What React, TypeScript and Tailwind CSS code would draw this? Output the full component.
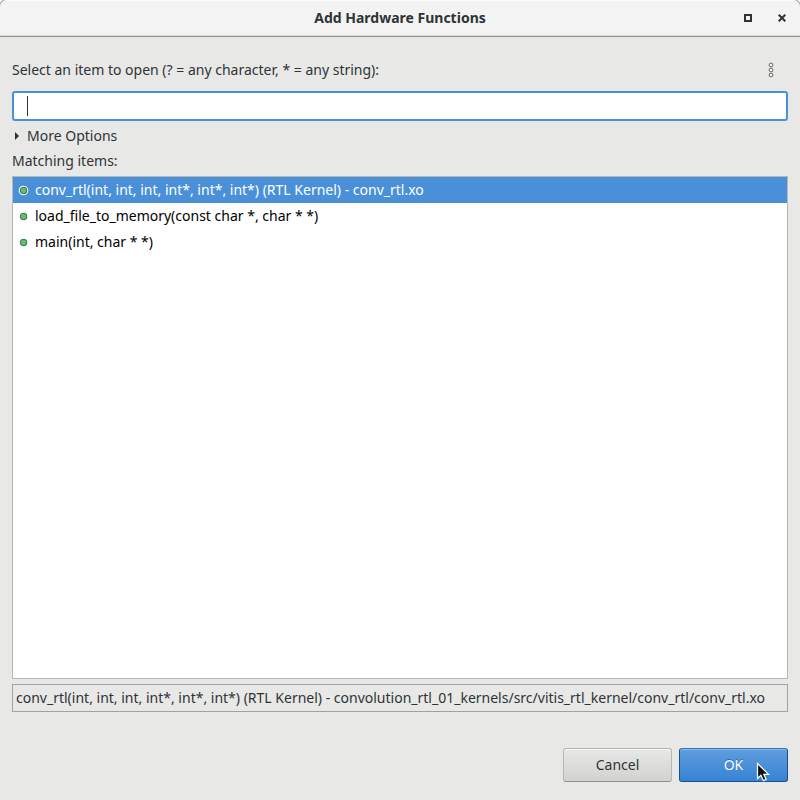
import { useState } from "react";

const items = [
  "conv_rtl(int, int, int, int*, int*, int*) (RTL Kernel) - conv_rtl.xo",
  "load_file_to_memory(const char *, char * *)",
  "main(int, char * *)",
];

function MethodDot({ selected }: { selected: boolean }) {
  return (
    <svg width="11" height="11" viewBox="0 0 11 11" className="shrink-0" aria-hidden="true">
      {selected && <circle cx="5.5" cy="5.5" r="4.8" fill="#fff" />}
      <circle cx="5.5" cy="5.5" r="3.2" fill="#6fb573" stroke="#2c8649" strokeWidth="1.1" />
    </svg>
  );
}

function TitleBar() {
  return (
    <header className="bg-white">
      <div className="grid h-[37px] grid-cols-[1fr_auto_1fr] items-center rounded-t-[7px] border-t border-b border-t-[#fdfdfd] border-b-[#8f908a] bg-[#f3f3f3] pb-0.5 shadow-[inset_0_-1px_0_#dcdcda,0_0_0_1px_#a8a8a6]">
        <span />
        <h1 className="text-[14px] leading-5 font-bold text-[#2e3436]">Add Hardware Functions</h1>
        <div className="flex items-center justify-end gap-[14px] pr-2">
          <button type="button" aria-label="Maximize" className="flex size-5 items-center justify-center">
            <svg width="8" height="8" viewBox="0 0 8 8">
              <rect x="1" y="1" width="6" height="6" fill="none" stroke="#2e3436" strokeWidth="2" />
            </svg>
          </button>
          <button type="button" aria-label="Close" className="flex size-5 items-center justify-center">
            <svg width="8" height="8" viewBox="0 0 8 8">
              <path d="M.7.7l6.6 6.6M7.3.7L.7 7.3" stroke="#2e3436" strokeWidth="2" />
            </svg>
          </button>
        </div>
      </div>
    </header>
  );
}

export default function App() {
  const [selected, setSelected] = useState(0);
  return (
    <div className="flex min-h-screen flex-col bg-[#e8e8e6] font-['Noto_Sans',sans-serif] text-[14px] leading-5 text-[#2e3436]">
      <TitleBar />
      <main className="flex flex-1 flex-col bg-[#e8e8e6] px-3 pt-5 pb-[18px]">
        <div className="flex h-[26px] items-center justify-between">
          <label htmlFor="filter">Select an item to open (? = any character, * = any string):</label>
          <button type="button" aria-label="View menu" className="mr-[7px] flex size-5 items-center justify-center">
            <svg width="6" height="16" viewBox="0 0 6 16" fill="#f6f6f5" stroke="#666" strokeWidth="1">
              <circle cx="3" cy="3" r="1.9" />
              <circle cx="3" cy="8" r="1.9" />
              <circle cx="3" cy="13" r="1.9" />
            </svg>
          </button>
        </div>
        <div className="relative mt-2 flex">
          <input
            id="filter"
            type="text"
            className="h-[30px] w-full rounded-[3px] border-2 border-[#4a90d9] bg-white px-3 caret-transparent outline-none"
          />
          <span className="absolute top-[5px] left-[15px] h-5 w-px bg-[#2e3436]" />
        </div>
        <button type="button" className="mt-0.5 flex h-[25px] items-center gap-2 self-start pl-[3px]">
          <svg width="4" height="8" viewBox="0 0 4 8" fill="#2e3436">
            <path d="M0 0l4 4-4 4z" />
          </svg>
          More Options
        </button>
        <div id="matching" className="flex h-[25px] items-center">
          Matching items:
        </div>
        <ul role="listbox" aria-labelledby="matching" className="mt-[3px] flex-1 border border-[#b6b6b3] bg-white">
          {items.map((item, i) => (
            <li
              key={item}
              role="option"
              aria-selected={i === selected}
              onClick={() => setSelected(i)}
              className={
                i === selected
                  ? "flex h-[26px] items-center gap-[6px] bg-[#4a90d9] pl-[5px] text-white"
                  : "flex h-[26px] items-center gap-[6px] pl-[5px] text-black"
              }
            >
              <MethodDot selected={i === selected} />
              {item}
            </li>
          ))}
        </ul>
        <div className="mt-[5px] flex h-7 items-center border border-[#a1a1a1] px-[3px] whitespace-nowrap">
          conv_rtl(int, int, int, int*, int*, int*) (RTL Kernel) - convolution_rtl_01_kernels/src/vitis_rtl_kernel/conv_rtl/conv_rtl.xo
        </div>
        <div className="mt-9 flex justify-end gap-[7px]">
          <button
            type="button"
            className="h-[34px] w-[109px] rounded-[3px] border border-[#b6b6b3] border-b-[#91918c] bg-linear-to-b from-[#e8e8e7] to-[#d2d2d0] shadow-[inset_0_1px_#f8f8f8]"
          >
            Cancel
          </button>
          <div className="relative">
            <button
              type="button"
              className="h-[34px] w-[109px] rounded-[3px] border border-[#1c5187] border-t-[#2a76c6] bg-linear-to-b from-[#5f9ddd] to-[#3583d5] text-white shadow-[inset_0_1px_#8bb8e7] [text-shadow:0_-1px_#2a6bb0]"
            >
              OK
            </button>
            <svg
              width="14"
              height="20"
              viewBox="0 0 14 20"
              className="pointer-events-none absolute top-[14px] left-[77px]"
              aria-hidden="true"
            >
              <path
                d="M1.5 1.5v15l3.4-3.2 2.5 5.4 2.8-1.3-2.4-5.1h4.7z"
                fill="#111"
                stroke="#fff"
                strokeWidth="1.2"
              />
            </svg>
          </div>
        </div>
      </main>
    </div>
  );
}
